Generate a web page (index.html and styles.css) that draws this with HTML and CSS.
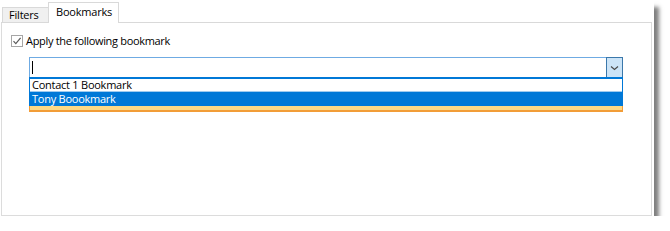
FILE: index.html
```html
<!DOCTYPE html>
<html>
<head>
<meta charset="utf-8">
<link rel="stylesheet" href="styles.css">
</head>
<body>
<div class="window">
  <div class="tabs">
    <div class="tab-lead"></div>
    <div class="tab tab-inactive">Filters</div>
    <div class="tab tab-active">Bookmarks</div>
    <div class="tab-fill"></div>
  </div>
  <div class="panel">
    <label class="check-row">
      <span class="checkbox">
        <svg width="10" height="10" viewBox="0 0 10 10"><polyline points="1.5,5.2 3.8,7.6 8.6,1.8" fill="none" stroke="#5a5a5a" stroke-width="1.2"/></svg>
      </span>
      <span class="check-label">Apply the following bookmark</span>
    </label>
    <div class="combo-wrap">
      <div class="combo">
        <div class="combo-input"><span class="caret"></span></div>
        <div class="combo-btn">
          <svg width="9" height="6" viewBox="0 0 9 6"><polyline points="1,1.5 4.5,4.5 8,1.5" fill="none" stroke="#4a4a4a" stroke-width="1.2"/></svg>
        </div>
      </div>
      <div class="list">
        <div class="item">Contact 1 Bookmark</div>
        <div class="item item-selected">Tony Boookmark</div>
      </div>
      <div class="strip"></div>
    </div>
  </div>
</div>
</body>
</html>
```
FILE: styles.css
```css
html, body {
  margin: 0;
  padding: 0;
  background: #ffffff;
}

body {
  font-family: "Open Sans", "Noto Sans", sans-serif;
  font-size: 11px;
  color: #000;
}

.window {
  width: 654px;
  height: 216px;
  box-sizing: border-box;
  padding: 0 2px 0 1px;
  background: #ffffff;
  box-shadow: 6px 6px 4px -1px rgba(0, 0, 0, 0.5);
  display: flex;
  flex-direction: column;
}

.tabs {
  display: flex;
  align-items: flex-end;
  height: 23px;
  flex: none;
}

.tab-lead {
  width: 1px;
  border-bottom: 1px solid #d9d9d9;
}

.tab {
  box-sizing: border-box;
  border: 1px solid #d9d9d9;
  letter-spacing: -0.2px;
  white-space: nowrap;
}

.tab-inactive {
  width: 46px;
  height: 16px;
  background: #f0f0f0;
  border-right: none;
  padding-left: 6px;
  line-height: 13px;
}

.tab-active {
  width: 71px;
  height: 21px;
  background: #ffffff;
  border-bottom: none;
  padding-left: 7px;
  line-height: 15px;
  padding-top: 1px;
}

.tab-fill {
  flex: 1;
  border-bottom: 1px solid #d9d9d9;
}

.panel {
  flex: 1;
  border: 1px solid #dcdcdc;
  border-top: none;
  padding: 11px 0 0 9px;
}

.check-row {
  display: flex;
  align-items: center;
  height: 14px;
}

.checkbox {
  width: 12px;
  height: 12px;
  box-sizing: border-box;
  border: 1px solid #a6a6a6;
  display: flex;
  align-items: center;
  justify-content: center;
  background: #fff;
}

.check-label {
  margin-left: 3px;
  letter-spacing: -0.32px;
  line-height: 14px;
}

.combo-wrap {
  margin: 9px 0 0 18px;
  width: 594px;
}

.combo {
  display: flex;
  height: 20px;
  box-sizing: border-box;
  border: 1px solid #6fabe3;
  border-bottom: none;
}

.combo-input {
  flex: 1;
  display: flex;
  align-items: center;
  padding-left: 2px;
}

.caret {
  width: 1px;
  height: 13px;
  background: #000;
}

.combo-btn {
  width: 17px;
  margin: -1px -1px 0 0;
  box-sizing: border-box;
  border: 1px solid #3b78ab;
  border-bottom: none;
  background: #cce4f7;
  display: flex;
  align-items: center;
  justify-content: center;
}

.list {
  border: 1px solid #0078d7;
  border-top-width: 2px;
  border-bottom: none;
}

.item {
  height: 12px;
  line-height: 12px;
  padding-left: 2px;
  letter-spacing: -0.25px;
  white-space: nowrap;
}

.item:first-child {
  border-bottom: 1px solid #9fcbef;
}

.item-selected {
  height: 14px;
  line-height: 14px;
  background: #0078d7;
  color: #ffffff;
}

.strip {
  height: 4px;
  background: #fed985;
  border: 1px solid #f29d38;
  border-top: none;
  border-bottom-width: 2px;
}
```
